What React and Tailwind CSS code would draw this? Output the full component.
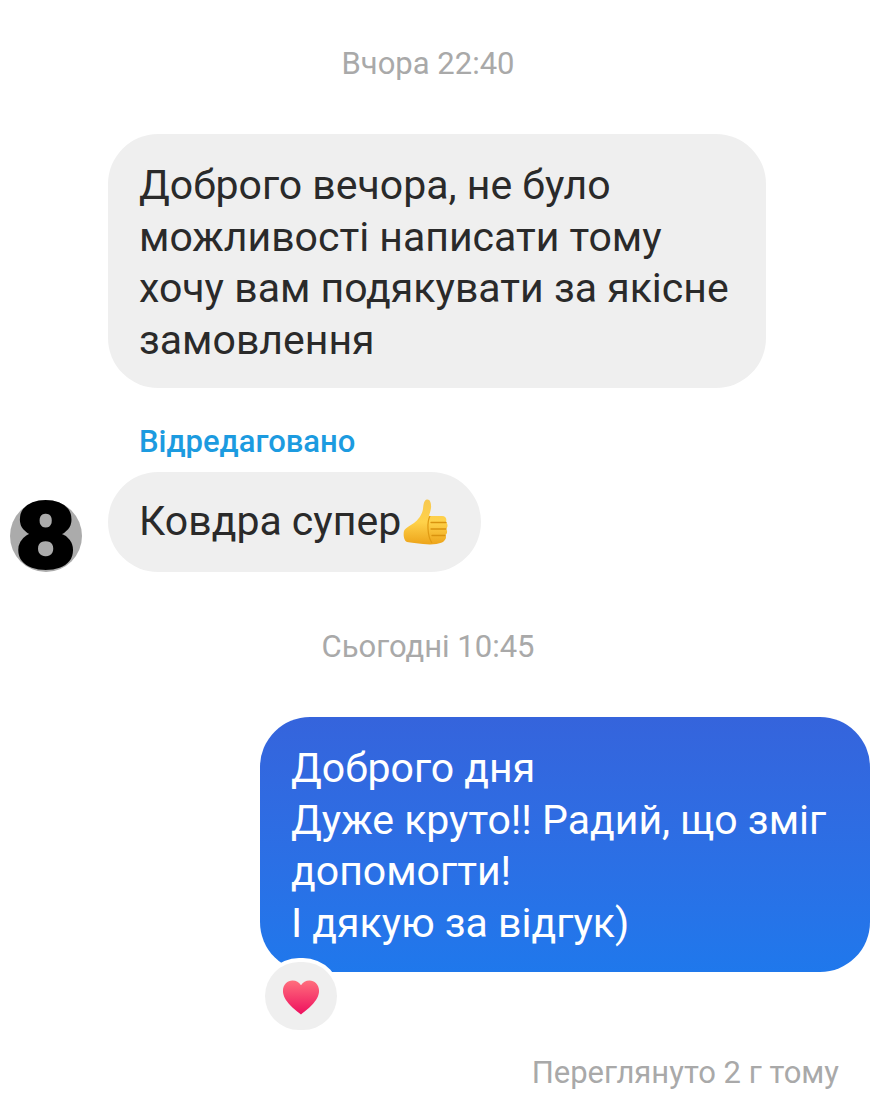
import React from 'react';

const ThumbsUp = () => (
  <svg width="46" height="48" viewBox="0 0 46 48" className="shrink-0 ml-[2px]">
    <defs>
      <linearGradient id="thumb" x1="0" y1="0" x2="0" y2="1">
        <stop offset="0" stopColor="#f7c850" />
        <stop offset="0.5" stopColor="#ffd24a" />
        <stop offset="1" stopColor="#eda41a" />
      </linearGradient>
    </defs>
    <path
      d="M1 33 C2 30 7 28 11 25 C15 22 19 17 20 11 C20.5 6 21 2 24 1.5 C27 1 28.5 5 28 10 C27.6 13 26.5 16 26 18 L39 18 C43 18 44 21 43 24 C45 26 45 29 43 31 C45 33 44 36 42.5 37 C44 40 42 43 39 44.5 C34 46.5 27 47 20 46 C14 45 8 45 4 44 C1 43 0 37 1 33 Z"
      fill="url(#thumb)"
    />
    <path d="M28 24.5 H43 M28 31 H43 M29 37.5 H42" stroke="#d9930f" strokeWidth="1.3" strokeLinecap="round" fill="none" />
    <path d="M27 18 C24 23 24 38 29 45" stroke="#e09a12" strokeWidth="1.2" fill="none" />
  </svg>
);

const Heart = () => (
  <svg width="38" height="37" viewBox="0 0 40 38" className="mt-[3px]">
    <defs>
      <linearGradient id="heart" x1="0" y1="0" x2="0" y2="1">
        <stop offset="0" stopColor="#ff6f7d" />
        <stop offset="1" stopColor="#ee0f5e" />
      </linearGradient>
    </defs>
    <path
      d="M20 37 C14 32 1 23 1 12 C1 5 6 1 11 1 C15 1 18 3 20 6 C22 3 25 1 29 1 C34 1 39 5 39 12 C39 23 26 32 20 37 Z"
      fill="url(#heart)"
    />
  </svg>
);

const Timestamp = ({ children, className }) => (
  <div className={`text-center pr-[31px] text-[31px] leading-[34px] text-[#a9a9a9] ${className}`}>{children}</div>
);

export default function App() {
  return (
    <div className="w-[887px] h-[1097px] overflow-hidden bg-white pt-[47px] font-['Roboto',sans-serif] text-[41px] leading-[51.5px] text-[#2a2a2a]">
      <Timestamp>Вчора 22:40</Timestamp>

      <div className="mt-[53px] ml-[108px] w-[658px] h-[254px] rounded-[50px] bg-[#efefef] pl-[31px] pt-[26px]">
        Доброго вечора, не було
        <br />
        можливості написати тому
        <br />
        хочу вам подякувати за якісне
        <br />
        замовлення
      </div>

      <div className="mt-[37px] ml-[139px] text-[31px] leading-[34px] font-medium text-[#1c9be0]">Відредаговано</div>

      <div className="mt-[13px] ml-[10px] flex items-end gap-[26px]">
        <div className="w-[72px] h-[72px] shrink-0 rounded-full bg-[#ababab] flex items-center justify-center pt-[2px] text-[92px] leading-[72px] font-black text-black [-webkit-text-stroke:2px_black]">
          <span className="inline-block scale-x-[1.15]">8</span>
        </div>
        <div className="h-[100px] w-[373px] rounded-[50px] bg-[#efefef] pl-[31px] flex items-center">
          <span>Ковдра супер</span>
          <ThumbsUp />
        </div>
      </div>

      <Timestamp className="mt-[58px]">Сьогодні 10:45</Timestamp>

      <div className="mt-[53px] ml-[260px] w-[610px] h-[255px] rounded-[50px] bg-gradient-to-b from-[#3564dc] to-[#1f78ec] pl-[31px] pt-[26px] text-white">
        Доброго дня
        <br />
        Дуже круто!! Радий, що зміг
        <br />
        допомогти!
        <br />І дякую за відгук)
      </div>

      <div className="-mt-[14px] ml-[261px] w-[80px] h-[76px] rounded-full bg-white p-[4px] relative">
        <div className="w-full h-full rounded-full bg-[#efefef] flex items-center justify-center">
          <Heart />
        </div>
      </div>

      <div className="mt-[22px] mr-[48px] text-right text-[31px] leading-[34px] text-[#a9a9a9]">Переглянуто 2 г тому</div>
    </div>
  );
}
